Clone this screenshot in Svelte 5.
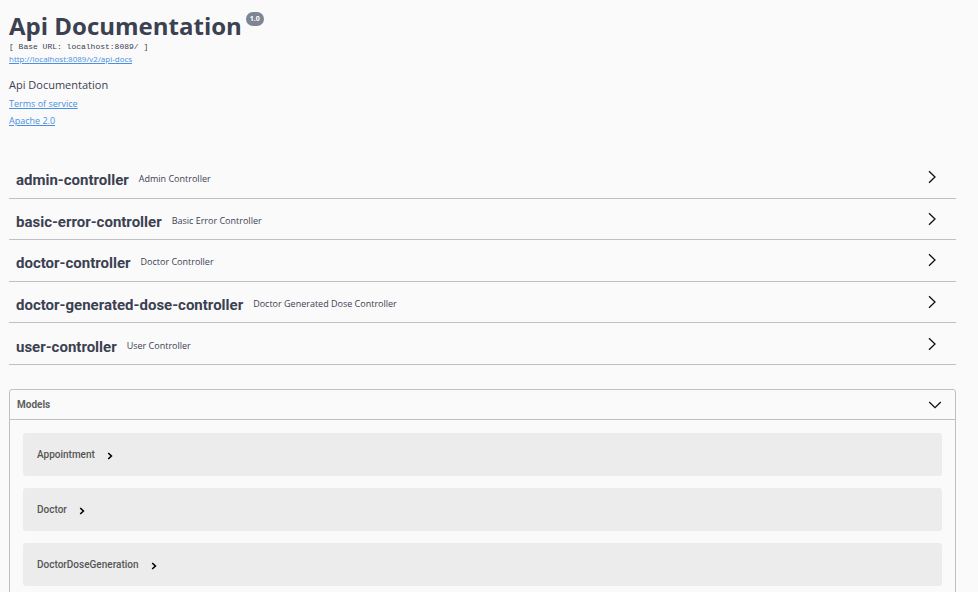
<script>
  const controllers = [
    { name: 'admin-controller', description: 'Admin Controller' },
    { name: 'basic-error-controller', description: 'Basic Error Controller' },
    { name: 'doctor-controller', description: 'Doctor Controller' },
    { name: 'doctor-generated-dose-controller', description: 'Doctor Generated Dose Controller' },
    { name: 'user-controller', description: 'User Controller' }
  ];
  const models = ['Appointment', 'Doctor', 'DoctorDoseGeneration'];
</script>

<main>
  <header>
    <div class="title">
      <h1>Api Documentation</h1>
      <span class="version">1.0</span>
    </div>
    <pre>[ Base URL: localhost:8089/ ]</pre>
    <a class="docs" href="/v2/api-docs">http://localhost:8089/v2/api-docs</a>
    <p>Api Documentation</p>
    <a class="info" href="#terms">Terms of service</a>
    <a class="info" href="#license">Apache 2.0</a>
  </header>

  <section class="tags">
    {#each controllers as c}
      <div class="tag">
        <h2>{c.name}</h2>
        <small>{c.description}</small>
        <button aria-label="Expand {c.name}">
          <svg width="14" height="14" viewBox="0 0 14 14"><path d="M4 1.2L10 7L4 12.8" /></svg>
        </button>
      </div>
    {/each}
  </section>

  <section class="models">
    <button class="models-head">
      <span>Models</span>
      <svg width="14" height="14" viewBox="0 0 14 14"><path d="M1.2 4L7 9.6L12.8 4" /></svg>
    </button>
    <div class="list">
      {#each models as m}
        <button class="model">
          <span>{m}</span>
          <svg class="small" width="6" height="8" viewBox="0 0 6 8"><path d="M1.2 1L4.4 4L1.2 7" /></svg>
        </button>
      {/each}
    </div>
  </section>
</main>

<style>
  :global(body) {
    margin: 0;
    background: #fafafa;
  }
  main {
    padding: 10px 22px 14px 9px;
    color: #3b4151;
    font-family: 'Open Sans', sans-serif;
  }
  h1, h2, p, pre {
    margin: 0;
  }
  button {
    padding: 0;
    border: 0;
    background: none;
    color: inherit;
    font: inherit;
    cursor: pointer;
  }
  svg {
    display: block;
    fill: none;
    stroke: #111;
    stroke-width: 1.3;
  }
  header {
    display: flex;
    flex-direction: column;
    align-items: flex-start;
  }
  .title {
    display: flex;
    align-items: flex-start;
    gap: 4px;
  }
  h1 {
    font-size: 24px;
    line-height: 31px;
    font-weight: 700;
  }
  .version {
    margin-top: 2px;
    padding: 0 4px;
    border-radius: 7px;
    background: #7d8492;
    color: #fff;
    font-size: 7px;
    font-weight: 700;
    line-height: 14px;
  }
  pre {
    font: 8px/12px 'Liberation Mono', monospace;
  }
  a {
    color: #4990e2;
  }
  .docs {
    font-size: 8px;
    line-height: 12px;
  }
  p {
    margin: 12px 0 2px;
    font-size: 11px;
    line-height: 16px;
  }
  .info {
    font-size: 9px;
    line-height: 17px;
  }
  .tags {
    display: grid;
    grid-auto-rows: 1fr;
    min-height: 208px;
    margin: 28px 0 24px;
  }
  .tag {
    display: flex;
    align-items: center;
    gap: 10px;
    padding: 0 17px 0 7px;
    border-bottom: 1px solid #bfc0c4;
  }
  h2 {
    padding-top: 6px;
    font: 700 15px/22px Roboto, sans-serif;
  }
  small {
    flex: 1;
    padding-top: 4px;
    font-size: 9px;
    line-height: 14px;
  }
  .models {
    border: 1px solid #bfc0c4;
    border-radius: 3px;
  }
  .models-head {
    display: flex;
    align-items: center;
    justify-content: space-between;
    width: 100%;
    height: 30px;
    padding: 0 13px 0 7px;
    border-bottom: 1px solid #bfc0c4;
    color: #606060;
    font: 700 10px/16px Roboto, sans-serif;
  }
  .list {
    display: flex;
    flex-direction: column;
    gap: 12px;
    padding: 13px;
  }
  .model {
    display: flex;
    align-items: center;
    gap: 12px;
    padding: 13px 14px;
    border-radius: 3px;
    background: #ececec;
    color: #555;
    font: 500 10px/17px Roboto, sans-serif;
  }
  .small {
    margin-top: 2px;
    stroke: #000;
    stroke-width: 1.6;
  }
</style>
